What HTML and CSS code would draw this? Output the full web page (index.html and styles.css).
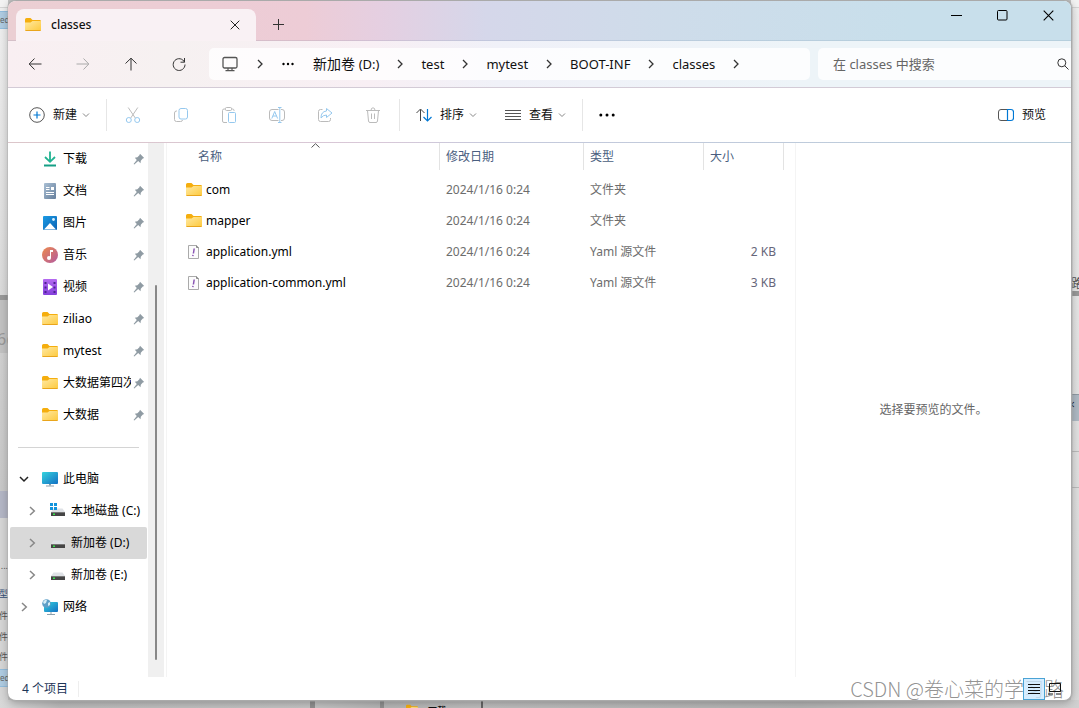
FILE: index.html
```html
<!DOCTYPE html>
<html lang="zh-CN">
<head>
<meta charset="utf-8">
<title>classes</title>
<link rel="stylesheet" href="styles.css">
</head>
<body>
<svg class="defs" aria-hidden="true">
  <defs>
    <linearGradient id="gFolder" x1="0" y1="0" x2="1" y2="1"><stop offset="0" stop-color="#ffe9a2"/><stop offset="1" stop-color="#fdc93c"/></linearGradient>
    <linearGradient id="gScreen" x1="0" y1="0" x2="1" y2="1"><stop offset="0" stop-color="#35d3dd"/><stop offset="1" stop-color="#1470c4"/></linearGradient>
    <linearGradient id="gMusic" x1="0" y1="0" x2="1" y2="1"><stop offset="0" stop-color="#ee8a4c"/><stop offset="1" stop-color="#b25aa0"/></linearGradient>
    <linearGradient id="gVideo" x1="0" y1="0" x2="0" y2="1"><stop offset="0" stop-color="#b46af0"/><stop offset="1" stop-color="#8440dc"/></linearGradient>
    <linearGradient id="gDoc" x1="0" y1="0" x2="1" y2="1"><stop offset="0" stop-color="#a9bfd4"/><stop offset="1" stop-color="#667f9c"/></linearGradient>
    <linearGradient id="gPic" x1="0" y1="0" x2="1" y2="1"><stop offset="0" stop-color="#1b9be4"/><stop offset="1" stop-color="#0b62b4"/></linearGradient>
  </defs>
  <symbol id="folder" viewBox="0 0 16 16"><path d="M0 2.5Q0 1 1.5 1H5.500L7.500 3H14.500Q16 3 16 4V8H0z" fill="#f5ae0e"/><path d="M0 5.500H5.500L7.500 4H15.500Q16 4 16 4.500V13Q16 14 15 14H1Q0 14 0 13z" fill="url(#gFolder)"/><path d="M.5 13.500H15.500" stroke="#e9a51c"/></symbol>
  <symbol id="pin" viewBox="0 0 12 12"><path d="M7 .8 11.200 5 9.800 5.600 7.800 7.700 7.500 10.200 5.200 8.100 1.300 11.600.6 11 3.800 6.900 1.800 4.700 4.400 4.300 6.400 2.200z" fill="#8f9ba3"/></symbol>
  <symbol id="right" viewBox="0 0 12 12"><path d="M4 2 8.300 6 4 10" fill="none" stroke="currentColor" stroke-width="1.500"/></symbol>
  <symbol id="crumb" viewBox="0 0 6 10"><path d="M1 1 5 5 1 9" fill="none" stroke="#333" stroke-width="1.300"/></symbol>
  <symbol id="down" viewBox="0 0 8 8"><path d="M1 2.500 4 5.500 7 2.500" fill="none" stroke="#888"/></symbol>
  <symbol id="drive" viewBox="0 0 16 16"><path d="M3.500 5.500H12.500L15 9H1z" fill="#dfe2e6"/><path d="M1 9H15V13H1z" fill="#454545"/><path d="M1 9.500H15" stroke="#777"/><path d="M3 10.500H5V12H3z" fill="#36e34a"/></symbol>
  <symbol id="screen" viewBox="0 0 16 16"><rect y="1" width="16" height="12" rx="1" fill="url(#gScreen)"/><path d="M7 13H9V14.500H7z" fill="#8799a5"/><path d="M4 15H12" stroke="#8da0ad"/></symbol>
  <symbol id="yml" viewBox="0 0 16 16"><path d="M2.500 1.500H10.500L12.500 3.500V14.500H2.500z" fill="#fcfcfc" stroke="#aaa"/><path d="M10.500 1.500V3.500H12.500" fill="none" stroke="#888"/><path d="M8.200 4.500 7.400 9.500M7 10.800 6.800 12.200" stroke="#8a55b4" stroke-width="1.500"/></symbol>
</svg>

<div class="desktop" aria-hidden="true">
  <div class="edge edge-left">
    <span class="bg-sel sel-top">ted</span>
    <span class="bg-band"></span>
    <span class="bg-block-top"></span>
    <span class="bg-large">6c</span>
    <span class="bg-block"></span>
    <span class="bg-text t-more">...</span>
    <span class="bg-text t-type">型</span>
    <span class="bg-text t-a">件</span>
    <span class="bg-text t-b">件</span>
    <span class="bg-text t-c">件</span>
    <span class="bg-sel sel-bottom">ted</span>
  </div>
  <div class="edge edge-right">
    <span class="bg-glyph">路</span>
    <span class="bg-band"></span>
    <span class="bg-tab">×</span>
    <span class="bg-rule"></span>
  </div>
  <div class="edge edge-bottom">
    <span class="bar bar-a"></span><span class="bar bar-b"></span>
    <svg class="mini-folder"><use href="#folder"/></svg>
    <span class="mini-title">下载</span>
    <span class="bar bar-c"></span>
  </div>
</div>

<div class="window">
  <header class="titlebar">
    <div class="tab">
      <svg class="i16"><use href="#folder"/></svg>
      <span class="tab-name">classes</span>
      <button class="plain tab-close" aria-label="关闭标签页"><svg width="10" height="10" viewBox="0 0 10 10"><path d="M.7.7 9.300 9.300M9.300.7.7 9.300" stroke="#222"/></svg></button>
    </div>
    <button class="plain new-tab" aria-label="新标签页"><svg width="11" height="11" viewBox="0 0 11 11"><path d="M0 5.500H11M5.500 0V11" stroke="#333"/></svg></button>
    <div class="controls">
      <button class="plain" aria-label="最小化"><svg width="11" height="11" viewBox="0 0 11 11"><path d="M0 5.500H11" stroke="#000"/></svg></button>
      <button class="plain" aria-label="最大化"><svg width="11" height="11" viewBox="0 0 11 11"><rect x=".5" y=".5" width="9.500" height="9.500" rx="1" fill="none" stroke="#000"/></svg></button>
      <button class="plain" aria-label="关闭"><svg width="11" height="11" viewBox="0 0 11 11"><path d="M.7.7 10.300 10.300M10.300.7.7 10.300" stroke="#000" stroke-width="1.100"/></svg></button>
    </div>
  </header>

  <div class="navbar">
    <button class="plain nav" aria-label="后退"><svg class="i16" viewBox="0 0 16 16"><path d="M14.500 8H2.500M7.500 2.500 2.200 8 7.500 13.500" class="ln"/></svg></button>
    <button class="plain nav dim" aria-label="前进" disabled><svg class="i16" viewBox="0 0 16 16"><path d="M1.500 8H13.500M8.500 2.500 13.800 8 8.500 13.500" class="ln"/></svg></button>
    <button class="plain nav" aria-label="向上"><svg class="i16" viewBox="0 0 16 16"><path d="M8 14.500V2.500M2.500 7.500 8 2.200 13.500 7.500" class="ln"/></svg></button>
    <button class="plain nav" aria-label="刷新"><svg class="i16" viewBox="0 0 16 16"><path d="M13.500 6.200A5.900 5.900 0 1 0 14 8.500M13.500 2V6.200H9.500" class="ln"/></svg></button>
    <nav class="address" aria-label="地址">
      <svg class="i16 device" viewBox="0 0 16 16"><rect x="1" y="1.500" width="14" height="10.500" rx="1.500" fill="none" stroke="#555" stroke-width="1.300"/><path d="M6 12V14.500M10 12V14.500M3.500 14.700H12.500" stroke="#555" stroke-width="1.200"/></svg>
      <svg class="sep-c"><use href="#crumb"/></svg>
      <button class="plain" aria-label="更多路径"><svg width="14" height="4" viewBox="0 0 14 4"><circle cx="2.500" cy="2" r="1.200"/><circle cx="7" cy="2" r="1.200"/><circle cx="11.500" cy="2" r="1.200"/></svg></button>
      <a href="#">新加卷 <span class="lat">(D:)</span></a><svg class="sep-c"><use href="#crumb"/></svg>
      <a href="#" class="lat">test</a><svg class="sep-c"><use href="#crumb"/></svg>
      <a href="#" class="lat">mytest</a><svg class="sep-c"><use href="#crumb"/></svg>
      <a href="#" class="lat">BOOT-INF</a><svg class="sep-c"><use href="#crumb"/></svg>
      <a href="#" class="lat">classes</a><svg class="sep-c"><use href="#crumb"/></svg>
    </nav>
    <div class="search">
      <input type="text" aria-label="搜索" placeholder="在 classes 中搜索">
      <svg width="12" height="12" viewBox="0 0 12 12"><circle cx="4.800" cy="4.800" r="4" class="ln"/><path d="M7.700 7.700 11.500 11.500" class="ln"/></svg>
    </div>
  </div>

  <div class="toolbar">
    <button class="plain labelled"><svg class="i16" viewBox="0 0 16 16"><circle cx="8" cy="8" r="7.300" fill="none" stroke="#555"/><path d="M8 4.500V11.500M4.500 8H11.500" stroke="#0078d4" stroke-width="1.200"/></svg><span>新建</span><svg class="i8"><use href="#down"/></svg></button>
    <span class="rule"></span>
    <div class="actions">
      <button class="plain" aria-label="剪切" disabled><svg class="i16" viewBox="0 0 16 16"><path d="M3.200.5 10.300 11M12.800.5 5.700 11" fill="none" stroke="#bbb"/><circle cx="3.800" cy="13" r="2.500" fill="none" stroke="#95c8ee"/><circle cx="12.200" cy="13" r="2.500" fill="none" stroke="#95c8ee"/></svg></button>
      <button class="plain" aria-label="复制" disabled><svg class="i16" viewBox="0 0 16 16"><path d="M4 4H3.500Q1.500 4 1.500 6V12.500Q1.500 14.500 3.500 14.500H7.500Q9.500 14.500 9.500 13" fill="none" stroke="#bbb"/><rect x="6" y="1.500" width="8.500" height="10.500" rx="2" fill="none" stroke="#95c8ee"/></svg></button>
      <button class="plain" aria-label="粘贴" disabled><svg class="i16" viewBox="0 0 16 16"><path d="M6 15.500H3Q1.500 15.500 1.500 14V3.500Q1.500 2 3 2H4.500M10 2H11.500Q13 2 13 3.500V4" fill="none" stroke="#bbb"/><rect x="4.500" y=".5" width="6" height="3" rx="1" fill="none" stroke="#bbb"/><rect x="7.500" y="5.500" width="7" height="10" rx="1" fill="none" stroke="#95c8ee"/></svg></button>
      <button class="plain" aria-label="重命名" disabled><svg class="i16" viewBox="0 0 16 16"><path d="M9.500 2.500H3Q.5 2.500.5 5V11Q.5 13.500 3 13.500H9.500M12 2.500H13Q15.500 2.500 15.500 5V11Q15.500 13.500 13 13.500H12" fill="none" stroke="#bbb"/><path d="M10.800.5V15.500M9 .5H12.500M9 15.500H12.500M2.800 11.500 5.700 4.500 8.600 11.500M3.800 9H7.600" fill="none" stroke="#95c8ee"/></svg></button>
      <button class="plain" aria-label="共享" disabled><svg class="i16" viewBox="0 0 16 16"><path d="M5.500 2.500H3.500Q1.500 2.500 1.500 4.500V12.500Q1.500 14.500 3.500 14.500H11.500Q13.500 14.500 13.500 12.500V11" fill="none" stroke="#bbb"/><path d="M9.500 1.500 15 6 9.500 10.500V8Q6 8 4 11Q4 4.500 9.500 4z" fill="none" stroke="#95c8ee"/></svg></button>
      <button class="plain" aria-label="删除" disabled><svg class="i16" viewBox="0 0 16 16"><path d="M1 3.500H15M2.500 3.500 3.500 14Q3.700 15.500 5 15.500H11Q12.300 15.500 12.500 14L13.500 3.500M6 3.500Q6 .8 8 .8T10 3.500M6.500 6.500V12M9.500 6.500V12" fill="none" stroke="#bbb"/></svg></button>
    </div>
    <span class="rule"></span>
    <button class="plain labelled"><svg class="i16" viewBox="0 0 16 16"><path d="M4.500 14V2.500M.5 6 4.500 2 8.500 6" fill="none" stroke="#444"/><path d="M11.500 2V13.500M7.500 10 11.500 14 15.500 10" fill="none" stroke="#0078d4" stroke-width="1.200"/></svg><span>排序</span><svg class="i8"><use href="#down"/></svg></button>
    <button class="plain labelled view"><svg class="i16" viewBox="0 0 16 16"><path d="M0 3.500H16M0 6.500H16M0 9.500H16M0 12.500H16" stroke="#555"/></svg><span>查看</span><svg class="i8"><use href="#down"/></svg></button>
    <span class="rule"></span>
    <button class="plain" aria-label="更多"><svg width="16" height="4" viewBox="0 0 16 4"><circle cx="1.800" cy="2" r="1.500"/><circle cx="8" cy="2" r="1.500"/><circle cx="14.200" cy="2" r="1.500"/></svg></button>
    <button class="plain labelled preview-toggle"><svg class="i16" viewBox="0 0 16 16"><path d="M9.500 2.500H3Q.5 2.500.5 5V11Q.5 13.500 3 13.500H9.500" fill="none" stroke="#555"/><path d="M9.500 2.500H13Q15.500 2.500 15.500 5V11Q15.500 13.500 13 13.500H9.500z" fill="none" stroke="#0078d4" stroke-width="1.200"/></svg><span>预览</span></button>
  </div>

  <main class="content">
    <nav class="sidebar" aria-label="导航窗格">
      <a class="item pinned" href="#"><svg class="i16" viewBox="0 0 16 16"><path d="M8 .5V10M3 6 8 10.800 13 6" fill="none" stroke="#20b391" stroke-width="1.800"/><path d="M2 14.500H14" stroke="#169f86" stroke-width="1.800"/></svg><span class="name">下载</span><svg class="pin"><use href="#pin"/></svg></a>
      <a class="item pinned" href="#"><svg class="i16" viewBox="0 0 16 16"><rect x="2" width="12" height="16" rx="1" fill="url(#gDoc)"/><path d="M4 4.500H7.500M4 6.500H7.500M4 9.500H12M4 11.500H12" stroke="#fff"/><path d="M9 4H12V7H9z" fill="#fff"/></svg><span class="name">文档</span><svg class="pin"><use href="#pin"/></svg></a>
      <a class="item pinned" href="#"><svg class="i16" viewBox="0 0 16 16"><rect x="1" y="1" width="14" height="14" rx="1" fill="url(#gPic)"/><path d="M2 14.500 8 8 14 14.500z" fill="#fff"/><circle cx="11.500" cy="4.500" r="1.400" fill="#d8f1ff"/></svg><span class="name">图片</span><svg class="pin"><use href="#pin"/></svg></a>
      <a class="item pinned" href="#"><svg class="i16" viewBox="0 0 16 16"><circle cx="8" cy="8" r="8" fill="url(#gMusic)"/><path d="M8 3H11V5H9V11H8z" fill="#fff"/><circle cx="7" cy="11" r="2" fill="#fff"/></svg><span class="name">音乐</span><svg class="pin"><use href="#pin"/></svg></a>
      <a class="item pinned" href="#"><svg class="i16" viewBox="0 0 16 16"><rect x="1" y="0" width="14" height="16" rx="1" fill="url(#gVideo)"/><path d="M3.500 3V14M12.500 3V14" stroke="#4d2191" stroke-width="2" stroke-dasharray="2 2.500"/><path d="M6 4.500 11 8 6 11.500z" fill="#fff"/></svg><span class="name">视频</span><svg class="pin"><use href="#pin"/></svg></a>
      <a class="item pinned" href="#"><svg class="i16"><use href="#folder"/></svg><span class="name">ziliao</span><svg class="pin"><use href="#pin"/></svg></a>
      <a class="item pinned" href="#"><svg class="i16"><use href="#folder"/></svg><span class="name">mytest</span><svg class="pin"><use href="#pin"/></svg></a>
      <a class="item pinned" href="#"><svg class="i16"><use href="#folder"/></svg><span class="name">大数据第四次</span><svg class="pin"><use href="#pin"/></svg></a>
      <a class="item pinned" href="#"><svg class="i16"><use href="#folder"/></svg><span class="name">大数据</span><svg class="pin"><use href="#pin"/></svg></a>
      <hr>
      <a class="item" href="#"><svg class="chev open" viewBox="0 0 12 12"><path d="M2 4 6 8 10 4" fill="none" stroke="#222" stroke-width="1.500"/></svg><svg class="i16"><use href="#screen"/></svg><span class="name">此电脑</span></a>
      <a class="item nested" href="#"><svg class="chev"><use href="#right"/></svg><svg class="i16" viewBox="0 0 16 16"><use href="#drive" width="16" height="16"/><path d="M0 0H3V3H0zM4 0H7V3H4zM0 4H3V7H0zM4 4H7V7H4z" fill="#1193dc"/></svg><span class="name">本地磁盘 (C:)</span></a>
      <a class="item nested selected" href="#" aria-current="true"><svg class="chev"><use href="#right"/></svg><svg class="i16"><use href="#drive"/></svg><span class="name">新加卷 (D:)</span></a>
      <a class="item nested" href="#"><svg class="chev"><use href="#right"/></svg><svg class="i16"><use href="#drive"/></svg><span class="name">新加卷 (E:)</span></a>
      <a class="item" href="#"><svg class="chev"><use href="#right"/></svg><svg class="i16" viewBox="0 0 16 16"><rect x="2" y="3" width="14" height="10" rx="1" fill="url(#gScreen)"/><path d="M9 13V15M5 15.500H13" stroke="#8da0ad"/><circle cx="4.500" cy="4.500" r="4.300" fill="#5e9fc7"/><path d="M1 3Q3 0 5 1L4 4 2 5zM6 4 8 3 8 6 6 7z" fill="#d5edf6"/></svg><span class="name">网络</span></a>
    </nav>
    <div class="scrollbar"><div class="thumb"></div></div>
    <section class="files">
      <table>
        <colgroup><col class="c-name"><col class="c-date"><col class="c-type"><col class="c-size"></colgroup>
        <thead><tr>
          <th><span>名称</span><svg class="sort" width="9" height="5" viewBox="0 0 9 5"><path d="M.5 4.500 4.500.7 8.500 4.500" fill="none" stroke="#555"/></svg></th>
          <th><span>修改日期</span></th><th><span>类型</span></th><th><span>大小</span></th>
        </tr></thead>
        <tbody>
          <tr><td><div class="file"><svg class="i16"><use href="#folder"/></svg>com</div></td><td>2024/1/16 0:24</td><td>文件夹</td><td></td></tr>
          <tr><td><div class="file"><svg class="i16"><use href="#folder"/></svg>mapper</div></td><td>2024/1/16 0:24</td><td>文件夹</td><td></td></tr>
          <tr><td><div class="file"><svg class="i16"><use href="#yml"/></svg>application.yml</div></td><td>2024/1/16 0:24</td><td>Yaml 源文件</td><td>2 KB</td></tr>
          <tr><td><div class="file"><svg class="i16"><use href="#yml"/></svg>application-common.yml</div></td><td>2024/1/16 0:24</td><td>Yaml 源文件</td><td>3 KB</td></tr>
        </tbody>
      </table>
    </section>
    <aside class="preview">选择要预览的文件。</aside>
  </main>

  <footer class="status">
    <span class="count">4 个项目</span>
    <span class="watermark">CSDN @卷心菜的学习路</span>
    <div class="views">
      <button class="plain active" aria-label="详细信息"><svg width="12" height="12" viewBox="0 0 12 12"><path d="M0 1.500H12M0 4.500H12M0 7.500H12M0 10.500H12" stroke="#111"/></svg></button>
      <button class="plain" aria-label="大图标"><svg width="14" height="12" viewBox="0 0 14 12"><path d="M1.500.5H12.500V8.500H1.500zM0 11H5M8 11H13" fill="none" stroke="#111"/></svg></button>
    </div>
  </footer>
</div>
</body>
</html>
```
FILE: styles.css
```css
* { box-sizing: border-box; }
body {
  margin: 0;
  padding: 0 7px 7px 8px;
  min-height: 100vh;
  display: flex;
  position: relative;
  overflow: hidden;
  background: #c4c4c4;
  color: #111;
  font: 12px/16px "Noto Sans", "Noto Sans CJK SC", sans-serif;
}
svg { flex: none; display: block; }
a { color: inherit; text-decoration: none; }
.defs { position: absolute; width: 0; height: 0; }
.plain {
  border: 0; padding: 0; background: none; color: inherit; font: inherit;
  display: flex; align-items: center; justify-content: center;
}
.i16 { width: 16px; height: 16px; }
.i8 { width: 8px; height: 8px; }
.ln { fill: none; stroke: #333; }
.dim .ln { stroke: #aaa; }

/* Windows behind the explorer */
.desktop, .edge, .edge > * { position: absolute; }
.desktop { inset: 0; overflow: hidden; }
.edge { overflow: hidden; white-space: nowrap; }
.edge-left { left: 0; top: 0; bottom: 0; width: 8px; background: linear-gradient(#f3f3f3 0 7px, #d5d5d5 7px 8px, #efefef 8px, #dadada 296px, #c6c6c6 300px, #d0d0d0 353px, #c8c8c8 490px, #d6d6d6 518px, #d6d6d6); }
.edge-right { right: 0; top: 0; bottom: 0; width: 8px; background: linear-gradient(#f3f3f3 0 7px, #d5d5d5 7px 8px, #efefef 8px, #d8d8d8 100%); }
.edge-bottom { left: 0; right: 0; bottom: 0; height: 8px; background: linear-gradient(90deg, #d8d8d8, #bcbcbc 60px, #c4c4c4 310px, #b6b6b6 380px, #bebebe 482px, #b4b4b4 800px, #d0d0d0); }
.bg-sel { left: 0; right: 0; height: 18px; background: #afcce2; border: 1px solid #92bddd; border-width: 1px 0; color: #666; font-size: 8px; text-indent: -3px; }
.sel-top { top: 11px; }
.sel-bottom { top: 669px; }
.bg-band { left: 0; right: 0; top: 295px; height: 5px; background: #999; }
.edge-right .bg-band { top: 291px; }
.bg-block-top { left: 0; right: 0; top: 300px; height: 53px; background: #c2c2c2; }
.bg-large { left: -3px; top: 327px; font-size: 16px; line-height: 24px; color: #999; }
.bg-block { left: 0; right: 0; top: 491px; height: 27px; background: #b3b6c5; }
.bg-text { right: 0; font-size: 9px; color: #555; }
.t-more { top: 558px; }
.t-type { top: 586px; color: #345078; }
.t-a { top: 608px; }
.t-b { top: 629px; }
.t-c { top: 649px; }
.bg-glyph { left: 0; top: 276px; color: #555; }
.bg-tab { left: 0; right: 0; top: 394px; height: 27px; line-height: 20px; background: #afbac4; border-top: 1px solid #909aa3; text-indent: -3px; }
.bg-rule { left: 0; right: 0; top: 451px; height: 37px; border: 1px solid #bbb; border-width: 1px 0; }
.bar { top: 0; bottom: 0; background: #909090; }
.bar-a { left: 310px; width: 5px; }
.bar-b { left: 380px; width: 4px; }
.bar-c { left: 481px; width: 2px; background: #666; }
.mini-folder { left: 406px; top: 4px; width: 12px; height: 12px; }
.mini-title { left: 428px; top: 3px; font-size: 9px; font-weight: 700; }

.window {
  position: relative;
  flex: 1;
  min-width: 0;
  display: flex;
  flex-direction: column;
  overflow: hidden;
  background: #fff;
  border: 1px solid #aaa;
  border-left-width: 0;
  border-radius: 8px;
  box-shadow: 0 0 0 1px #aaa6, 0 2px 8px #0004;
}
.titlebar {
  display: flex;
  height: 40px;
  padding-left: 8px;
  background: linear-gradient(90deg, #ebcfd3, #edccd6 28%, #e5cfe1 35%, #d5d7ea 45%, #cedcea 62%, #c8dfeb 85%);
  border-bottom: 1px solid #0b306018;
}
.tab {
  display: flex;
  align-items: center;
  width: 240px;
  height: 32px;
  margin-top: 8px;
  padding: 0 16px 0 9px;
  border-radius: 8px 8px 0 0;
  background: #f9f1f4;
}
.tab-name { margin-left: 10px; flex: 1; font-weight: 500; }
.new-tab { width: 44px; margin-top: 7px; height: 32px; }
.controls { display: flex; margin-left: auto; }
.controls button { width: 46px; height: 28px; }

.navbar {
  display: flex;
  align-items: center;
  height: 47px;
  padding-left: 3px;
  background: linear-gradient(90deg, #f9eff2, #f6f1f1 15%, #f8eff4 34%, #f0f1f8 46%, #edf4f8 75%);
  border-bottom: 1px solid #d3cbd6;
}
.nav { width: 48px; height: 32px; }
.address, .search { height: 32px; background: #fffc; display: flex; align-items: center; font-size: 14px; line-height: 20px; }
.address { flex: 588 1 0; margin: 0 8px 0 6px; padding-left: 13px; gap: 18px; border-radius: 5px; white-space: nowrap; }
.device { margin-right: 1px; }
.lat { font-size: 13px; }
.sep-c { width: 6px; height: 10px; }
.search { flex: 236 1 0; border-radius: 5px 0 0 5px; padding: 0 2px 0 15px; }
.search input { flex: 1; min-width: 0; border: 0; padding: 0; background: none; font: 13px/20px "Noto Sans", "Noto Sans CJK SC", sans-serif; }
.search input::placeholder { color: #666; opacity: 1; }

.toolbar { display: flex; align-items: center; height: 55px; padding: 0 25px 0 21px; border-bottom: 1px solid; border-image: linear-gradient(90deg, #dcc6ca, #d8c8d8 35%, #c5c9dc 46%, #b9cddb) 1; }
.labelled span { margin: 0 5px 0 8px; }
.rule { width: 1px; height: 32px; margin: 0 16px; background: #e6e6e6; }
.actions { display: flex; margin: 0 -14px; }
.actions button { width: 48px; height: 32px; }
.view { margin-left: 28px; }
.preview-toggle { margin-left: auto; }
.preview-toggle span { margin-right: 0; }

.content { flex: 1; display: grid; grid-template-columns: 140px 16px 632px minmax(0, 1fr); }
.sidebar { padding: 0 1px 0 2px; color: #000; }
.item { display: flex; align-items: center; height: 32px; padding-left: 8px; border-radius: 2px; white-space: nowrap; }
.pinned { padding: 0 2px 0 32px; }
.nested { padding-left: 16px; }
.selected { background: #d9d9d9; }
.chev { width: 12px; height: 12px; margin-right: 12px; color: #888; }
.name { flex: 1; margin-left: 5px; min-width: 0; overflow: hidden; }
.pin { width: 12px; height: 12px; margin-left: 2px; }
.sidebar hr { height: 1px; margin: 16px 8px 15px; border: 0; background: #d4d4d4; }
.scrollbar { background: #f0f0f0; padding: 142px 7px 17px; display: flex; }
.thumb { width: 2px; background: #888; border-radius: 1px; }

.files { margin-left: 2px; border: 1px solid #f4f4f4; border-width: 0 1px; }
table { table-layout: fixed; width: 617px; border-spacing: 0; }
.c-name { width: 273px; }
.c-date { width: 144px; }
.c-type { width: 120px; }
.c-size { width: 80px; }
th { position: relative; height: 31px; padding: 0; vertical-align: top; text-align: left; font-weight: 400; color: #4a5e80; }
th span { display: block; height: 27px; line-height: 27px; padding-left: 6px; border-right: 1px solid #e3e3e3; }
th:first-child span { padding-left: 31px; }
.sort { position: absolute; left: 144px; top: 0; }
td { height: 31px; padding: 0 8px 0 6px; color: #6d6d6d; white-space: nowrap; }
td:first-child { padding-left: 19px; color: #000; }
td:last-child { text-align: right; color: #66667a; }
.file { display: flex; align-items: center; gap: 4px; }
.preview { display: flex; align-items: center; justify-content: center; color: #666; }

.status { position: relative; display: flex; align-items: center; height: 23px; padding: 0 6px 0 14px; color: #1d3557; }
.count { padding-right: 10px; border-right: 1px solid #eee; }
.views { position: relative; display: flex; margin-left: auto; }
.views button { width: 20px; height: 22px; }
.views .active { width: 22px; background: #cce8ffcc; border: 1px solid #4aa3d5; }
.watermark { position: absolute; right: 7px; top: 0; font: 300 20px/24px "Noto Sans CJK SC", sans-serif; color: #777c; white-space: nowrap; }
```
